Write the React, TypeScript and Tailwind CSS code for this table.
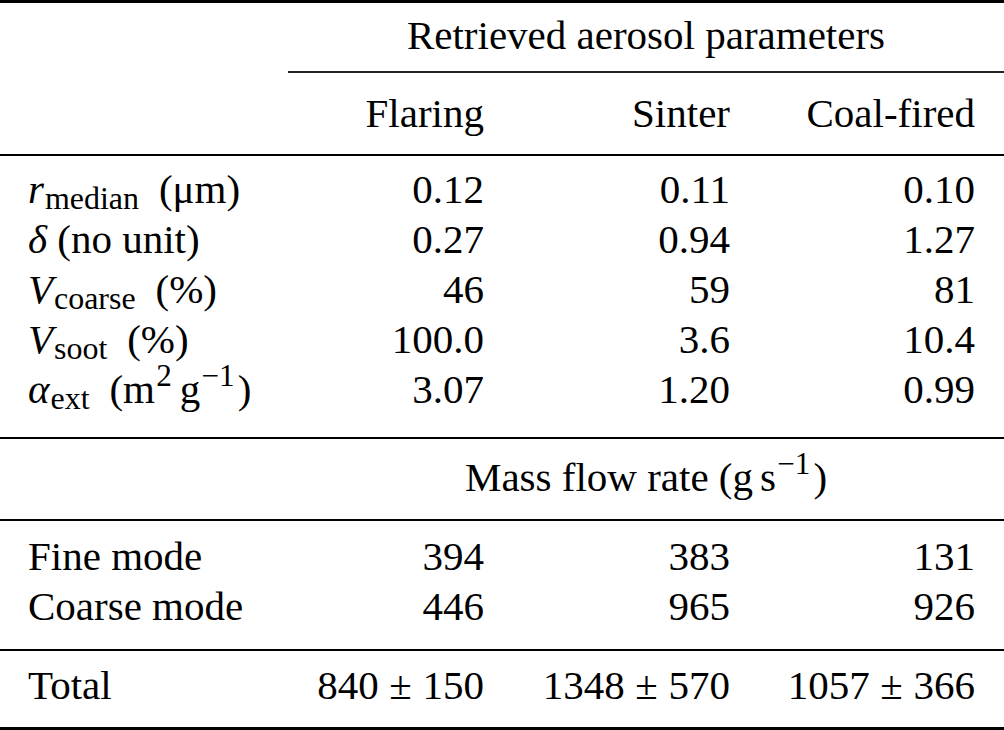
import React from 'react'

type Row = {
  id: number
  label: React.ReactNode
  values: React.ReactNode[]
}

function Sub({ children }: { children: React.ReactNode }) {
  return (
    <sub className="text-[0.78em] leading-none bottom-[-0.2em] ml-[0.03em] mr-[0.3em]">
      {children}
    </sub>
  )
}

function Sup({ children }: { children: React.ReactNode }) {
  return (
    <sup className="text-[0.76em] leading-none top-[-0.55em] ml-[0.04em] mr-[0.1em]">
      {children}
    </sup>
  )
}

function PlusMinus({ a, b }: { a: string; b: string }) {
  return (
    <span>
      {a}
      <span className="mx-[0.26em]">±</span>
      {b}
    </span>
  )
}

function App() {

  const aerosolRows: Row[] = [
    {
      id: 1,
      label: (
        <>
          <i>r</i>
          <Sub>median</Sub> (μm)
        </>
      ),
      values: ['0.12', '0.11', '0.10'],
    },
    {
      id: 2,
      label: (
        <>
          <i>δ</i> (no unit)
        </>
      ),
      values: ['0.27', '0.94', '1.27'],
    },
    {
      id: 3,
      label: (
        <>
          <i>V</i>
          <Sub>coarse</Sub> (%)
        </>
      ),
      values: ['46', '59', '81'],
    },
    {
      id: 4,
      label: (
        <>
          <i>V</i>
          <Sub>soot</Sub> (%)
        </>
      ),
      values: ['100.0', '3.6', '10.4'],
    },
    {
      id: 5,
      label: (
        <>
          <i>α</i>
          <Sub>ext</Sub> (m<Sup>2</Sup>
          <span className="ml-[0.12em]">g</span>
          <Sup>−1</Sup>)
        </>
      ),
      values: ['3.07', '1.20', '0.99'],
    },
  ]

  const flowRows: Row[] = [
    { id: 1, label: 'Fine mode', values: ['394', '383', '131'] },
    { id: 2, label: 'Coarse mode', values: ['446', '965', '926'] },
  ]

  const columns = ['Flaring', 'Sinter', 'Coal-fired']

  const gridRow = 'grid grid-cols-[260px_196px_246px_245px] pl-[28px] pr-[29px]'

  function renderRows(rows: Row[]) {
    return rows.map((row) => (
      <div key={row.id} className={gridRow}>
        <div className="whitespace-nowrap">{row.label}</div>
        {row.values.map((v, i) => (
          <div key={i} className="text-right">
            {v}
          </div>
        ))}
      </div>
    ))
  }

  return (
    <div
      className="w-[1004px] h-[730px] bg-white text-black text-[41px] leading-[50px]"
      style={{ fontFamily: '"Liberation Serif", "Times New Roman", serif' }}
    >
      {/* top rule */}
      <div className="h-[3px] bg-black" />

      <div className="h-[68px] pt-[7px] pl-[288px] text-center whitespace-nowrap">
        Retrieved aerosol parameters
      </div>
      <div className="h-[2px] ml-[288px] bg-[#222]" />

      <div className={`${gridRow} h-[81px] pt-[15px]`}>
        <div />
        {columns.map((c) => (
          <div key={c} className="text-right">
            {c}
          </div>
        ))}
      </div>
      <div className="h-[2px] bg-black" />

      <div className="h-[281px] pt-[8px]">{renderRows(aerosolRows)}</div>
      <div className="h-[2px] bg-black" />

      <div className="h-[80px] pt-[13px] pl-[288px] text-center whitespace-nowrap">
        Mass flow rate (g<span className="ml-[0.17em]">s</span>
        <Sup>−1</Sup>)
      </div>
      <div className="h-[2px] bg-black" />

      <div className="h-[128px] pt-[10px]">{renderRows(flowRows)}</div>
      <div className="h-[2px] bg-black" />

      <div className={`${gridRow} h-[76px] pt-[9px]`}>
        <div>Total</div>
        <div className="text-right whitespace-nowrap">
          <PlusMinus a="840" b="150" />
        </div>
        <div className="text-right whitespace-nowrap">
          <PlusMinus a="1348" b="570" />
        </div>
        <div className="text-right whitespace-nowrap">
          <PlusMinus a="1057" b="366" />
        </div>
      </div>
      {/* bottom rule */}
      <div className="h-[3px] bg-black" />
    </div>
  )
}

export default App
